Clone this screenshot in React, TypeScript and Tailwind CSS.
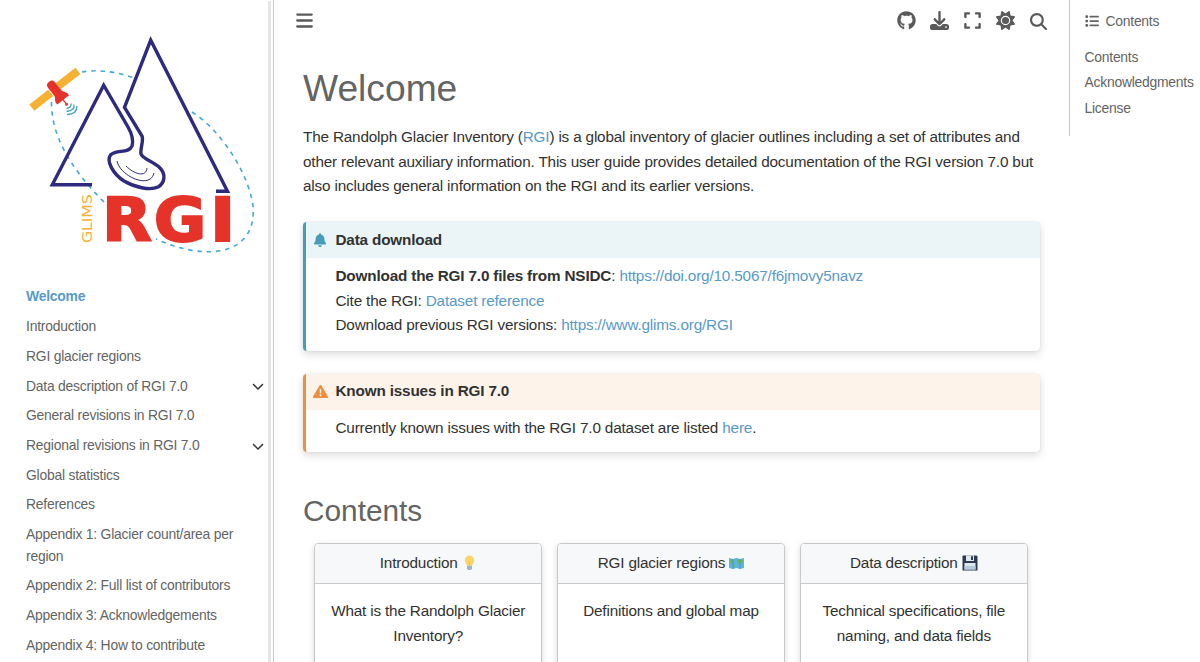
import React from 'react';
import {
  FaBars,
  FaBell,
  FaChevronDown,
  FaDownload,
  FaExpand,
  FaGithub,
  FaList,
  FaMagnifyingGlass,
  FaSun,
  FaTriangleExclamation,
} from 'react-icons/fa6';

const NAV_ITEMS: { label: string; active?: boolean; expandable?: boolean }[] = [
  { label: 'Welcome', active: true },
  { label: 'Introduction' },
  { label: 'RGI glacier regions' },
  { label: 'Data description of RGI 7.0', expandable: true },
  { label: 'General revisions in RGI 7.0' },
  { label: 'Regional revisions in RGI 7.0', expandable: true },
  { label: 'Global statistics' },
  { label: 'References' },
  { label: 'Appendix 1: Glacier count/area per region' },
  { label: 'Appendix 2: Full list of contributors' },
  { label: 'Appendix 3: Acknowledgements' },
  { label: 'Appendix 4: How to contribute' },
];

const Logo: React.FC = () => (
  <svg className="block" width="268" height="270" viewBox="0 0 268 270" fill="none">
    {/* Orbit */}
    <g stroke="#45a9d6" strokeWidth="1.6" strokeDasharray="4.5 4.8">
      <path d="M82 72C98 69 117 72 133 77.5" />
      <path d="M51.5 102C51 132 67 166 107 205" />
      <path d="M192 112C218 128 248 170 253 206C257 252 212 264 156 239" />
    </g>

    {/* Mountains and glacier */}
    <path
      d="M92 184.7H52.3L103.7 85.2L128 127C132 134 133.5 141 132 146C129 154 116 149 110.5 155C106 161 113 174 124 181C134 187 150 191 158 187C165 183 166 174 160 168C153 161 144 160 141 154C140 148 144 141 142 136L124.5 107.3L150.7 40.2L227.5 191.3H216"
      stroke="#2e2a80"
      strokeWidth="3.4"
    />
    <path d="M117 161C120 176 150 190 154 173" stroke="#2e2a80" strokeWidth="1" />
    <path d="M126 166C134 174 146 178 147 168" stroke="#2e2a80" strokeWidth="1" />

    {/* Satellite */}
    <g transform="translate(54.5 89.5) rotate(-38)">
      <rect x="-29" y="-3.7" width="24" height="8" fill="#f6b032" />
      <rect x="5" y="-4.3" width="25" height="8" fill="#f6b032" />
    </g>
    <g transform="translate(57 92) rotate(-38)">
      <path
        d="M-4.5 -9Q-4.5 -13 0 -13Q4.5 -13 4.5 -9L4.5 2L7.5 7V10H-7.5V7L-4.5 2Z"
        fill="#e6332a"
      />
      <path d="M0 9V16" stroke="#e6332a" strokeWidth="1.4" />
      <circle cx="0" cy="15.5" r="1.5" fill="#e6332a" />
    </g>
    <g stroke="#45a0c0" strokeWidth="1.3">
      <path d="M71 103.5Q72 107 66.5 108.5" />
      <path d="M74 104.5Q75 110.5 66.5 111.5" />
      <path d="M77 106Q77 114.5 67 114.5" />
    </g>

    {/* Wordmark */}
    <g
      fill="#e6332a"
      stroke="#e6332a"
      strokeWidth="2.2"
      fontFamily="DejaVu Sans, sans-serif"
      fontWeight="700"
      fontSize="60.5"
    >
      <text transform="translate(102.3 240.8) scale(1.06 1)">R</text>
      <text transform="translate(154 240.8) scale(1.05 1)">G</text>
      <text transform="translate(210.3 240.8) scale(1.1 1)">I</text>
    </g>
    <text
      transform="translate(91.7 243) rotate(-90)"
      fill="#f6b032"
      fontFamily="DejaVu Sans, sans-serif"
      fontSize="14.5"
      textLength="48.5"
      lengthAdjust="spacingAndGlyphs"
    >
      GLIMS
    </text>
  </svg>
);

const Link: React.FC<{ children: React.ReactNode }> = ({ children }) => (
  <a href="#" className="text-[#579aca]">
    {children}
  </a>
);

const Sidebar: React.FC = () => (
  <aside className="flex h-full w-[274px] shrink-0 border-r border-[#c9c9c9]">
    <div className="w-[268px] shrink-0 overflow-hidden">
      <Logo />
      <nav className="pt-[12.4px] pl-[26px] tracking-[-0.22px]">
        {NAV_ITEMS.map((item) => (
          <a
            key={item.label}
            href="#"
            className={
              item.active
                ? 'flex items-center py-1 text-[13.9px] leading-[21.7px] font-bold text-[#579aca]'
                : 'flex items-center py-1 text-[13.9px] leading-[21.7px] text-[#646464]'
            }
          >
            <span className="w-[226px]">{item.label}</span>
            {item.expandable && <FaChevronDown className="size-[12px] shrink-0 text-[#323232]" />}
          </a>
        ))}
      </nav>
    </div>
    <div className="mt-px w-[3px] bg-[#e6e6e6]" />
  </aside>
);

const Admonition: React.FC<{
  icon: React.ReactNode;
  title: string;
  className: string;
  titleClassName: string;
  children: React.ReactNode;
}> = ({ icon, title, className, titleClassName, children }) => (
  <div
    className={`overflow-hidden rounded-[4px] border-l-[3px] shadow-[0_3px_8px_rgba(0,0,0,0.15),0_0_1px_rgba(0,0,0,0.2)] ${className}`}
  >
    <div className={`flex h-[36px] items-center pl-[7px] font-bold ${titleClassName}`}>
      <span className="w-[22.5px]">{icon}</span>
      <span className="text-[#323232]">{title}</span>
    </div>
    <div className="pt-[6px] pl-[29.5px]">{children}</div>
  </div>
);

const Card: React.FC<{ title: string; emoji: React.ReactNode; children: React.ReactNode }> = ({
  title,
  emoji,
  children,
}) => (
  <div className="h-[150px] rounded-[4px] border border-[#c9c9c9] text-center shadow-[0_2px_6px_rgba(0,0,0,0.15)]">
    <div className="flex h-[40px] items-center justify-center gap-[4px] rounded-t-[3px] border-b border-[#c9c9c9] bg-[#f6f8fa]">
      <span>{title}</span>
      {emoji}
    </div>
    <div className="px-3 pt-[15.5px] leading-[24.7px]">{children}</div>
  </div>
);

const BulbIcon: React.FC = () => (
  <svg width="15" height="16" viewBox="0 0 15 16">
    <path
      d="M7.5 .5a4.7 4.7 0 0 0-4.7 4.7c0 2.5 2 3.5 2.2 5.5h5c.2-2 2.2-3 2.2-5.5A4.7 4.7 0 0 0 7.5 .5Z"
      fill="#fdd467"
    />
    <path d="M6.5 6.5 7 10.7h1l.5-4.2" fill="#f8c24c" />
    <path d="M5 10.7h5v2.5L9 15H6l-1-1.8Z" fill="#a3b4c6" />
  </svg>
);

const MapIcon: React.FC = () => (
  <svg width="15" height="13" viewBox="0 0 15 13">
    <path d="m0 1 4 1 3.5-1L11 2l4-1v10l-4 1-3.5-1L4 12l-4-1Z" fill="#5db4dd" />
    <path d="m1 2 4 1-1 3-2 1Zm3 5 2 1-1 3Zm4-5 2 1v4l-2-2Zm3 0 3 1-1 4-2-1Z" fill="#6fb45d" />
    <path d="M4 2v10M11 2v10" stroke="#3f8db6" strokeWidth=".7" />
  </svg>
);

const FloppyIcon: React.FC = () => (
  <svg width="16" height="16" viewBox="0 0 16 16">
    <path d="M1 .5h13.5l1 1v14H.5V1Z" fill="#2e3b4e" />
    <path d="M4 .5h8V6H4Z" fill="#e3e9ef" />
    <path d="M9 1.3h2v3.7H9Z" fill="#2e3b4e" />
    <path d="M2.5 8h11v6.5h-11Z" fill="#dce7f0" />
    <path d="M2.5 11h11v3.5h-11Z" fill="#b5cbdc" />
  </svg>
);

const App: React.FC = () => {
  return (
    <div className="flex h-[662px] overflow-hidden bg-white font-['Liberation_Sans',Arial,sans-serif] text-[15.3px] leading-[24.5px] tracking-[-0.175px] text-[#323232]">
      <Sidebar />

      <div className="w-[795px] shrink-0">
        {/* Toolbar */}
        <header className="flex h-[41px] items-center justify-between pr-[22.5px] pl-[20.5px] text-[#5a5a5a]">
          <FaBars className="size-[19px]" />
          <div className="flex items-center gap-[14px]">
            <FaGithub className="size-[19px]" />
            <FaDownload className="size-[19px]" />
            <FaExpand className="size-[19px]" />
            <FaSun className="size-[19px]" />
            <FaMagnifyingGlass className="mt-px ml-[1px] size-[17px]" />
          </div>
        </header>

        <main className="w-[766px] pl-[29px]">
          <h1 className="pt-[25px] text-[37.2px] leading-[44px] tracking-normal text-[#646464]">Welcome</h1>
          <p className="pt-[15px]">
            The Randolph Glacier Inventory (<Link>RGI</Link>) is a global inventory of glacier outlines including a set of
            attributes and other relevant auxiliary information. This user guide provides detailed documentation of the
            RGI version 7.0 but also includes general information on the RGI and its earlier versions.
          </p>

          <Admonition
            icon={<FaBell className="size-[14px] text-[#459db9]" />}
            title="Data download"
            className="mt-[23.5px] h-[128.5px] border-[#459db9]"
            titleClassName="bg-[#ebf4f7]"
          >
            <p>
              <b>Download the RGI 7.0 files from NSIDC</b>: <Link>https://doi.org/10.5067/f6jmovy5navz</Link>
            </p>
            <p>
              Cite the RGI: <Link>Dataset reference</Link>
            </p>
            <p>
              Download previous RGI versions: <Link>https://www.glims.org/RGI</Link>
            </p>
          </Admonition>

          <Admonition
            icon={<FaTriangleExclamation className="size-[15px] text-[#ee9040]" />}
            title="Known issues in RGI 7.0"
            className="mt-[23px] h-[78.5px] border-[#ee9040]"
            titleClassName="bg-[#fdf3eb]"
          >
            <p>
              Currently known issues with the RGI 7.0 dataset are listed <Link>here</Link>.
            </p>
          </Admonition>

          <h2 className="pt-[41px] text-[29.8px] leading-[36px] tracking-normal text-[#646464]">Contents</h2>
          <div className="grid grid-cols-3 gap-[14.5px] pt-[13.5px] pr-[12px] pl-[11px]">
            <Card title="Introduction" emoji={<BulbIcon />}>
              What is the Randolph Glacier Inventory?
            </Card>
            <Card title="RGI glacier regions" emoji={<MapIcon />}>
              Definitions and global map
            </Card>
            <Card title="Data description" emoji={<FloppyIcon />}>
              Technical specifications, file naming, and data fields
            </Card>
          </div>
        </main>
      </div>

      {/* Page contents */}
      <aside className="h-[136px] w-[131px] shrink-0 border-l border-[#c9c9c9] pl-[14.5px] text-[13.9px] tracking-[-0.24px] text-[#646464]">
        <div className="flex h-[42px] items-center gap-[7px]">
          <FaList className="size-[14px]" />
          <span>Contents</span>
        </div>
        <nav className="flex flex-col pt-[2.5px] leading-[25.5px]">
          <a href="#">Contents</a>
          <a href="#">Acknowledgments</a>
          <a href="#">License</a>
        </nav>
      </aside>
    </div>
  );
};

export default App;
